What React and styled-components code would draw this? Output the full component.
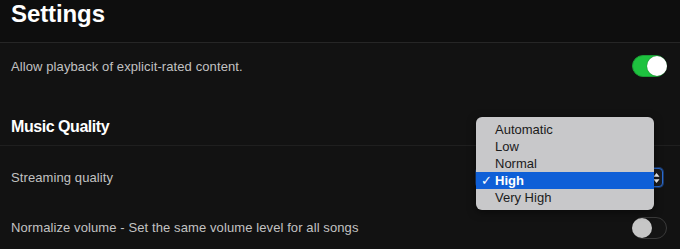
import React, { useState } from 'react';
import styled, { createGlobalStyle } from 'styled-components';

const GlobalStyle = createGlobalStyle`
  html, body {
    margin: 0;
    padding: 0;
    background: #121212;
  }
  body {
    font-family: 'Liberation Sans', Arial, sans-serif;
    -webkit-font-smoothing: antialiased;
  }
`;

const qualities = ['Automatic', 'Low', 'Normal', 'High', 'Very High'];

export default function App() {
  const [explicit, setExplicit] = useState(true);
  const [normalize, setNormalize] = useState(false);
  const [quality, setQuality] = useState('High');

  return (
    <Page>
      <GlobalStyle />
      <Header>
        <Title>Settings</Title>
      </Header>

      <Row $height={46}>
        <Label>Allow playback of explicit-rated content.</Label>
        <Toggle $on={explicit} onClick={() => setExplicit(!explicit)}>
          <Knob $on={explicit} />
        </Toggle>
      </Row>

      <SectionHead>
        <SectionTitle>Music Quality</SectionTitle>
      </SectionHead>

      <Row $height={62}>
        <Label>Streaming quality</Label>
        <SelectBox>
          <Arrows>
            <svg width="7" height="12" viewBox="0 0 7 12">
              <path d="M3.5 1 L6.5 4.8 L0.5 4.8 Z" fill="#fff" />
              <path d="M3.5 11 L6.5 7.2 L0.5 7.2 Z" fill="#fff" />
            </svg>
          </Arrows>
          <Menu>
            {qualities.map((q) => (
              <MenuItem key={q} $active={q === quality} onClick={() => setQuality(q)}>
                {q === quality && <Check>✓</Check>}
                {q}
              </MenuItem>
            ))}
          </Menu>
        </SelectBox>
      </Row>

      <Row $height={39}>
        <Label>Normalize volume - Set the same volume level for all songs</Label>
        <Toggle $on={normalize} onClick={() => setNormalize(!normalize)}>
          <Knob $on={normalize} />
        </Toggle>
      </Row>
    </Page>
  );
}

const Page = styled.div`
  width: 680px;
  height: 249px;
  overflow: hidden;
  background: #121212;
  display: flex;
  flex-direction: column;
`;

const Header = styled.header`
  height: 43px;
  box-sizing: border-box;
  padding: 2px 11px 0;
  background: #0e0e0e;
  border-bottom: 1px solid #262626;
  flex-shrink: 0;
`;

const Title = styled.h1`
  margin: 0;
  color: #fff;
  font-size: 24px;
  line-height: 24px;
  font-weight: 700;
  letter-spacing: -0.1px;
`;

const Row = styled.div`
  height: ${(p) => p.$height}px;
  flex-shrink: 0;
  display: flex;
  align-items: center;
  justify-content: space-between;
  padding: 0 13px 0 11px;
`;

const Label = styled.span`
  color: #c2c2c2;
  font-size: 13px;
  letter-spacing: 0.1px;
`;

const SectionHead = styled.div`
  height: 57px;
  box-sizing: border-box;
  flex-shrink: 0;
  display: flex;
  align-items: flex-end;
  padding: 0 11px 9px;
  border-bottom: 1px solid #1f1f1f;
`;

const SectionTitle = styled.h2`
  margin: 0;
  color: #fff;
  font-size: 16px;
  line-height: 18px;
  font-weight: 700;
  letter-spacing: -0.45px;
`;

const Toggle = styled.div`
  width: 35px;
  height: 22px;
  box-sizing: border-box;
  border-radius: 11px;
  background: ${(p) => (p.$on ? '#1ec23f' : '#141414')};
  border: 1px solid ${(p) => (p.$on ? '#1a9c35' : '#3a3a3a')};
  display: flex;
  align-items: center;
  justify-content: ${(p) => (p.$on ? 'flex-end' : 'flex-start')};
  cursor: pointer;
`;

const Knob = styled.div`
  width: 20px;
  height: 20px;
  border-radius: 50%;
  margin: 0 -1px;
  background: ${(p) => (p.$on ? '#ffffff' : '#c6c6c6')};
  box-shadow: 0 0 1px rgba(0, 0, 0, 0.6);
`;

const SelectBox = styled.div`
  position: relative;
  width: 187px;
  height: 19px;
  margin-right: 4px;
  margin-top: 1px;
  box-sizing: border-box;
  border-radius: 4px;
  background: #1c1c1e;
  border: 1px solid #2a6bd0;
  box-shadow: 0 0 0 1px rgba(42, 107, 208, 0.45);
  display: flex;
  align-items: center;
  justify-content: flex-end;
`;

const Arrows = styled.div`
  width: 9px;
  display: flex;
  justify-content: center;
  padding-right: 1px;
`;

const Menu = styled.ul`
  position: absolute;
  left: -1px;
  top: -52px;
  width: 178px;
  margin: 0;
  padding: 4px 0;
  list-style: none;
  background: #c8c8ca;
  border-radius: 6px;
  box-shadow: 0 2px 8px rgba(0, 0, 0, 0.5);
  overflow: hidden;
`;

const MenuItem = styled.li`
  position: relative;
  height: 17px;
  line-height: 17px;
  padding-left: 19px;
  font-size: 13px;
  color: ${(p) => (p.$active ? '#ffffff' : '#1b1b1b')};
  background: ${(p) => (p.$active ? '#0f5fd7' : 'transparent')};
  font-weight: ${(p) => (p.$active ? 700 : 400)};
  cursor: default;
`;

const Check = styled.span`
  position: absolute;
  left: 5px;
  top: 0;
  font-family: 'DejaVu Sans', sans-serif;
  font-size: 13px;
  font-weight: 700;
`;
